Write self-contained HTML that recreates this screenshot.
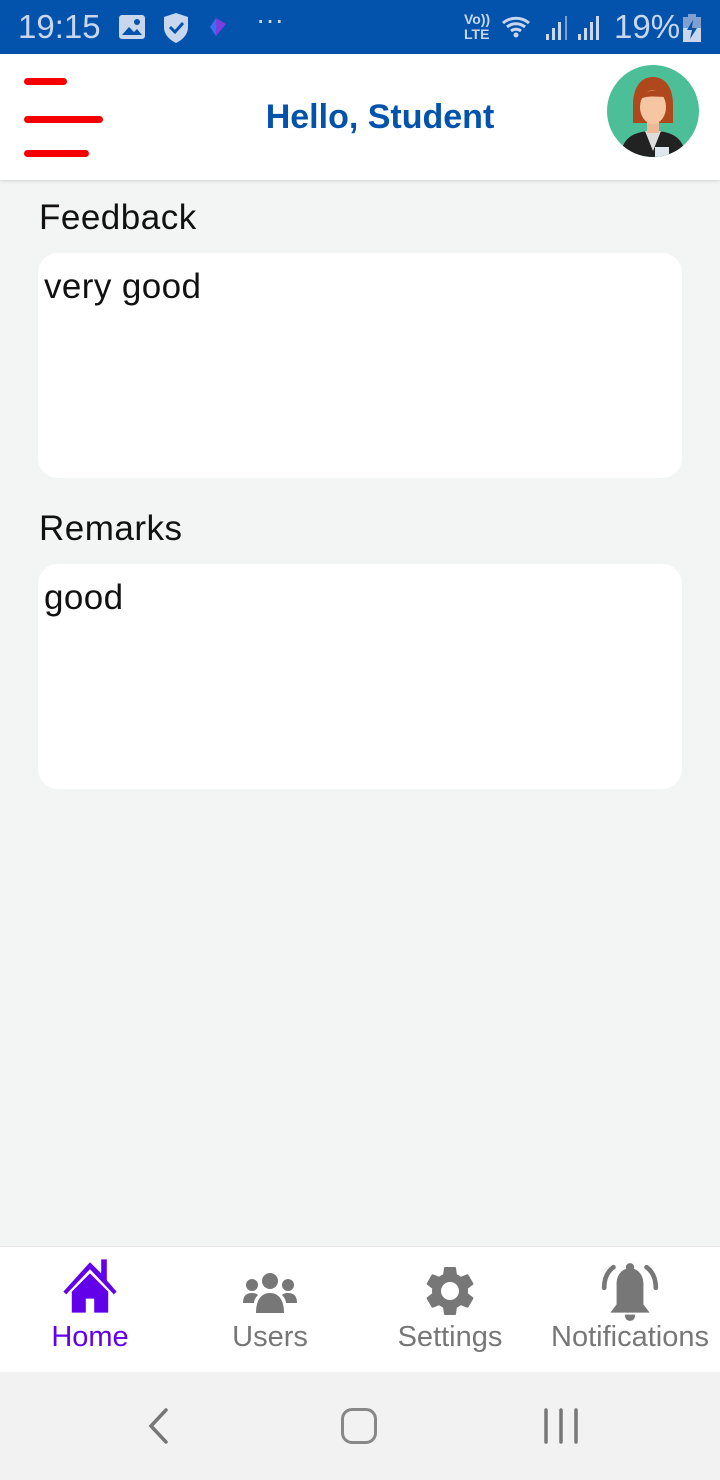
<!DOCTYPE html>
<html><head><meta charset="utf-8"><style>
*{margin:0;padding:0;box-sizing:border-box}
body{width:720px;height:1480px;background:#f3f4f4;font-family:"Liberation Sans",sans-serif;position:relative;overflow:hidden}
.sb{position:absolute;top:0;left:0;width:720px;height:54px;background:#0353ad;color:#c8d6ee}
.hdr{position:absolute;top:54px;left:0;width:720px;height:126px;background:#fff;box-shadow:0 1px 3px rgba(0,0,0,.15)}
.bar{position:absolute;left:24px;height:7px;border-radius:4px;background:#f40000}
.lbl{position:absolute;left:39px;font-size:35px;color:#111;letter-spacing:0.5px}
.box{position:absolute;left:38px;width:644px;height:225px;background:#fff;border-radius:20px;font-size:35px;color:#111;padding:14px 6px;letter-spacing:0.4px}
.nav{position:absolute;top:1246px;left:0;width:720px;height:126px;background:#fff;border-top:1px solid #e6e6e6}
.it{position:absolute;top:74px;font-size:29px;color:#777;text-align:center;width:180px}
.sys{position:absolute;top:1372px;left:0;width:720px;height:108px;background:#f2f2f2}
</style></head><body>
<div class="sb">
<div style="position:absolute;left:18px;top:8px;font-size:33px">19:15</div>
<svg style="position:absolute;left:118px;top:14px" width="28" height="26"><rect x="1" y="1" width="26" height="24" rx="3" fill="#c8d6ee"/><path d="M4 21l7-8 5 5 3-3 5 6z" fill="#0353ad"/><circle cx="19" cy="8" r="3" fill="#0353ad"/></svg>
<svg style="position:absolute;left:162px;top:12px" width="28" height="32"><path d="M14 1l12 4v10c0 8-6 13-12 16C8 28 2 23 2 15V5z" fill="#c8d6ee"/><path d="M8 15l5 5 8-9" stroke="#0353ad" stroke-width="3" fill="none"/></svg>
<svg style="position:absolute;left:208px;top:16px" width="22" height="22"><path d="M8 2l10 6-10 12z" fill="#7a3ee0"/><path d="M8 2v18L2 11z" fill="#3870f0"/></svg>
<div style="position:absolute;left:256px;top:4px;font-size:28px">···</div>
<div style="position:absolute;left:464px;top:12px;font-size:14px;line-height:15px;font-weight:bold">Vo))<br>LTE</div>
<svg style="position:absolute;left:500px;top:12px" width="110" height="30"><path d="M3 11a20 20 0 0 1 26 0M7 15a14 14 0 0 1 18 0M11 19a8 8 0 0 1 10 0" stroke="#c8d6ee" stroke-width="3" fill="none"/><circle cx="16" cy="23" r="2.5" fill="#c8d6ee"/><rect x="46" y="22" width="3" height="6" fill="#c8d6ee"/><rect x="52" y="16" width="3" height="12" fill="#c8d6ee"/><rect x="58" y="10" width="3" height="18" fill="#c8d6ee"/><rect x="65" y="4" width="2" height="24" fill="#7f9fd0"/><rect x="78" y="22" width="3" height="6" fill="#c8d6ee"/><rect x="84" y="16" width="3" height="12" fill="#c8d6ee"/><rect x="90" y="10" width="3" height="18" fill="#c8d6ee"/><rect x="96" y="4" width="3" height="24" fill="#c8d6ee"/></svg>
<div style="position:absolute;left:614px;top:8px;font-size:33px">19%</div>
<svg style="position:absolute;left:682px;top:14px" width="20" height="28"><rect x="6" y="0" width="8" height="3" fill="#7f9fd0"/><rect x="1" y="3" width="18" height="25" fill="#7f9fd0"/><rect x="1" y="14" width="18" height="14" fill="#c8d6ee"/><path d="M11 6l-6 10h5l-2 9 7-11h-5z" fill="#0353ad"/></svg>
</div>
<div class="hdr">
<div class="bar" style="top:24px;width:43px"></div>
<div class="bar" style="top:62px;width:79px"></div>
<div class="bar" style="top:96px;width:65px"></div>
<div style="position:absolute;left:0;width:760px;text-align:center;top:44px;font-size:34px;font-weight:bold;color:#0353ad">Hello, Student</div>
<svg style="position:absolute;left:607px;top:11px" width="92" height="92" viewBox="0 0 92 92"><defs><clipPath id="c"><ellipse cx="46" cy="46" rx="46" ry="46"/></clipPath></defs><ellipse cx="46" cy="46" rx="46" ry="46" fill="#4dbf98"/><g clip-path="url(#c)"><path d="M26 40c0-18 8-28 20-28s20 10 20 28v18H26z" fill="#b0481d"/><path d="M14 92c0-18 12-26 32-26s32 8 32 26z" fill="#222"/><path d="M38 66l8 20 8-20z" fill="#ddd"/><rect x="40" y="54" width="12" height="14" fill="#f0b894"/><ellipse cx="46" cy="42" rx="13" ry="17" fill="#f6c6a3"/><path d="M33 34c4-10 20-12 26-2-8 0-18-2-26 2z" fill="#b0481d"/><rect x="48" y="82" width="14" height="10" fill="#dfe6ee"/></g></svg>
</div>
<div class="lbl" style="top:198px">Feedback</div>
<div class="box" style="top:253px">very good</div>
<div class="lbl" style="top:509px">Remarks</div>
<div class="box" style="top:564px">good</div>
<div class="nav">
<svg style="position:absolute;left:62px;top:10px" width="56" height="58" viewBox="0 0 40 40"><path d="M20 3L1 24l2 2L20 8l17 18 2-2-7-8V1h-4v10z" fill="#6200ea"/><path d="M7 24L20 11l13 13v15H23V29h-6v10H7z" fill="#6200ea"/></svg>
<div class="it" style="left:0;color:#6200ea">Home</div>
<svg style="position:absolute;left:242px;top:24px" width="56" height="44" viewBox="0 0 56 44"><circle cx="28" cy="10" r="8" fill="#777"/><circle cx="10" cy="14" r="6" fill="#777"/><circle cx="46" cy="14" r="6" fill="#777"/><path d="M14 42c0-14 6-20 14-20s14 6 14 20z" fill="#777"/><path d="M1 32c0-7 3-10 9-10 3 0 5 1 6 2-3 3-4 6-4 8z" fill="#777"/><path d="M55 32c0-7-3-10-9-10-3 0-5 1-6 2 3 3 4 6 4 8z" fill="#777"/></svg>
<div class="it" style="left:180px">Users</div>
<svg style="position:absolute;left:420px;top:14px" width="60" height="60" viewBox="0 0 24 24"><path fill="#777" d="M19.14 12.94c.04-.3.06-.61.06-.94s-.02-.64-.07-.94l2.03-1.58a.49.49 0 0 0 .12-.61l-1.920-3.32a.49.49 0 0 0-.59-.22l-2.39.96c-.5-.38-1.030-.7-1.62-.94L14.4 2.81a.48.48 0 0 0-.48-.41h-3.84c-.24 0-.43.17-.47.41l-.36 2.54c-.59.24-1.13.57-1.62.94l-2.39-.96a.48.48 0 0 0-.59.22L2.74 8.87c-.12.21-.08.47.12.61l2.03 1.58c-.05.3-.09.63-.09.94s.02.64.07.94l-2.03 1.58a.49.49 0 0 0-.12.61l1.92 3.32c.12.22.37.29.59.22l2.39-.96c.5.38 1.03.7 1.62.94l.36 2.54c.05.24.24.41.48.41h3.84c.24 0 .44-.17.47-.41l.36-2.54c.59-.24 1.13-.56 1.62-.94l2.39.96c.22.08.47 0 .59-.22l1.92-3.32c.12-.22.07-.47-.12-.61zM12 15.6A3.6 3.6 0 1 1 12 8.4a3.6 3.6 0 0 1 0 7.2z"/></svg>
<div class="it" style="left:360px">Settings</div>
<svg style="position:absolute;left:598px;top:14px" width="64" height="64" viewBox="0 0 60 62"><path d="M14 6C7 11 5 18 5 26M46 6c7 5 9 12 9 20" stroke="#777" stroke-width="4.5" fill="none" stroke-linecap="round"/><circle cx="30" cy="6" r="4" fill="#777"/><path d="M17 22c0-8 5-15 13-15s13 7 13 15v20l6 8H11l6-8z" fill="#777"/><path d="M25 52h10c0 4-2 6-5 6s-5-2-5-6z" fill="#777"/></svg>
<div class="it" style="left:540px">Notifications</div>
</div>
<div class="sys">
<svg style="position:absolute;left:146px;top:36px" width="24" height="36"><path d="M20 2L5 18l15 16" stroke="#777" stroke-width="3.5" fill="none" stroke-linecap="round"/></svg>
<div style="position:absolute;left:341px;top:36px;width:36px;height:36px;border:3.5px solid #888;border-radius:11px"></div>
<svg style="position:absolute;left:543px;top:36px" width="36" height="36"><path d="M3 2v32M18 2v32M33 2v32" stroke="#777" stroke-width="3.5" stroke-linecap="round"/></svg>
</div>
</body></html>
